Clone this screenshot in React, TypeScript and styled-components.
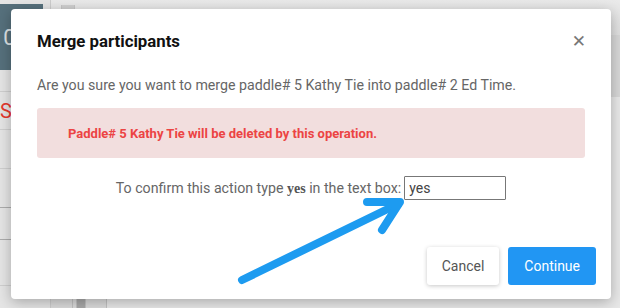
import React, { useState } from 'react'
import styled, { createGlobalStyle } from 'styled-components'

const GlobalStyle = createGlobalStyle`
  html, body {
    margin: 0;
    padding: 0;
    width: 620px;
    height: 308px;
    overflow: hidden;
    font-family: Roboto, 'Liberation Sans', sans-serif;
  }
`

const Page = styled.div`
  position: relative;
  width: 620px;
  height: 308px;
  display: flex;
  background: #f2f2f2;
  overflow: hidden;
`

const Sidebar = styled.div`
  width: 50px;
  display: flex;
  flex-direction: column;
  border-right: 1px solid #d6d6d6;
  background: #efefef;
`

const SideHead = styled.div`
  margin-top: 4px;
  height: 66px;
  width: 43px;
  background: #5a7582;
  color: #e6ecef;
  font-size: 22px;
  display: flex;
  align-items: center;
  overflow: hidden;
`

const HeadNum = styled.span`
  margin-left: -9px;
`

const SideRow = styled.div<{ $h: number; $dark?: boolean }>`
  height: ${p => p.$h}px;
  border-bottom: 1px solid ${p => (p.$dark ? '#b4b4b4' : '#d8d8d8')};
  color: #f03a2e;
  font-size: 20px;
  display: flex;
  align-items: center;
`

const Main = styled.div`
  flex: 1;
  display: flex;
  flex-direction: column;
`

const TopBar = styled.div`
  height: 35px;
  background: linear-gradient(#f4f4f4, #e9e9e9);
  display: flex;
  align-items: flex-start;
  padding-left: 10px;
`

const ScrollNub = styled.div`
  margin-top: 5px;
  width: 12px;
  height: 8px;
  border-left: 1px solid #cfcfcf;
  border-right: 1px solid #cfcfcf;
  background: #d9d9d9;
`

const GreyBand = styled.div`
  height: 62px;
  background: #e0e0e0;
`

const Fill = styled.div`
  flex: 1;
  display: flex;
  align-items: flex-end;
`

const FootCell = styled.div<{ $w: number; $dark?: boolean }>`
  width: ${p => p.$w}px;
  height: 9px;
  border-right: 1px solid #cacaca;
  background: ${p => (p.$dark ? '#b0b0b0' : '#e4e4e4')};
`

const Overlay = styled.div`
  position: absolute;
  inset: 0;
  background: rgba(0, 0, 0, 0.04);
`

const Modal = styled.div`
  position: absolute;
  left: 11px;
  top: 9px;
  width: 600px;
  height: 290px;
  background: #fff;
  border-radius: 4px;
  box-shadow: 0 3px 14px rgba(0, 0, 0, 0.28);
  display: flex;
  flex-direction: column;
`

const Header = styled.div`
  display: flex;
  align-items: center;
  justify-content: space-between;
  padding: 20px 26px 0 26px;
`

const Title = styled.h3`
  margin: 0;
  font-size: 16.8px;
  line-height: 24px;
  font-weight: 700;
  color: #111;
`

const Close = styled.button`
  border: 0;
  background: none;
  padding: 0;
  margin-right: -1px;
  font-family: 'DejaVu Sans', sans-serif;
  font-size: 17px;
  line-height: 24px;
  color: #777;
  cursor: pointer;
`

const Body = styled.div`
  padding: 22px 26px 0 26px;
  display: flex;
  flex-direction: column;
`

const Text = styled.p`
  margin: 0;
  font-size: 14.2px;
  line-height: 20px;
  color: #666;
`

const Alert = styled.div`
  margin-top: 13px;
  height: 50px;
  background: #f2dede;
  border-radius: 3px;
  display: flex;
  align-items: center;
  padding-left: 31px;
  font-size: 13px;
  font-weight: 700;
  color: #ec4444;
`

const ConfirmRow = styled.div`
  margin-top: 18px;
  display: flex;
  justify-content: center;
  align-items: center;
  gap: 3px;
  font-size: 14.2px;
  color: #666;
`

const Keyword = styled.b`
  font-family: 'Liberation Serif', serif;
  font-size: 14px;
  color: #555;
`

const Field = styled.input`
  width: 102px;
  height: 24px;
  box-sizing: border-box;
  border: 1px solid #777;
  border-radius: 1px;
  padding: 0 4px;
  font-family: Roboto, sans-serif;
  font-size: 14px;
  color: #444;
  outline: none;
`

const Footer = styled.div`
  margin-top: auto;
  padding: 0 15px 14px 0;
  display: flex;
  justify-content: flex-end;
  gap: 9px;
`

const Button = styled.button<{ $primary?: boolean }>`
  height: 38px;
  padding: 0 ${p => (p.$primary ? 16 : 15)}px;
  border: 0;
  border-radius: 3px;
  font-family: Roboto, sans-serif;
  font-size: 14px;
  background: ${p => (p.$primary ? '#2196f3' : '#fff')};
  color: ${p => (p.$primary ? '#fff' : '#555')};
  box-shadow: ${p => (p.$primary ? 'none' : '0 1px 4px rgba(0,0,0,0.22)')};
  cursor: pointer;
`

const Annotation = styled.svg`
  position: absolute;
  left: 0;
  top: 0;
  pointer-events: none;
`

const App = () => {
  const [value, setValue] = useState('yes')

  return (
    <>
      <GlobalStyle />
      <Page>
        <Sidebar>
          <SideHead>
            <HeadNum>10</HeadNum>
          </SideHead>
          <SideRow $h={21} />
          <SideRow $h={37}>S</SideRow>
          <SideRow $h={38} />
          <SideRow $h={38} $dark />
          <SideRow $h={31} $dark />
          <SideRow $h={45} />
        </Sidebar>
        <Main>
          <TopBar>
            <ScrollNub />
          </TopBar>
          <GreyBand />
          <Fill>
            <FootCell $w={21} />
            <FootCell $w={3} />
            <FootCell $w={8} $dark />
            <FootCell $w={20} />
          </Fill>
        </Main>
        <Overlay />
        <Modal>
          <Header>
            <Title>Merge participants</Title>
            <Close>✕</Close>
          </Header>
          <Body>
            <Text>Are you sure you want to merge paddle# 5 Kathy Tie into paddle# 2 Ed Time.</Text>
            <Alert>Paddle# 5 Kathy Tie will be deleted by this operation.</Alert>
            <ConfirmRow>
              <span>
                To confirm this action type <Keyword>yes</Keyword> in the text box:
              </span>
              <Field value={value} onChange={e => setValue(e.target.value)} />
            </ConfirmRow>
          </Body>
          <Footer>
            <Button>Cancel</Button>
            <Button $primary>Continue</Button>
          </Footer>
        </Modal>
        <Annotation width="620" height="308" viewBox="0 0 620 308">
          <g stroke="#1d9bf0" strokeWidth="8" strokeLinecap="round" strokeLinejoin="round" fill="none">
            <path d="M242 280 L398 204" />
            <path d="M367 202 L400 202 L382 230" />
          </g>
        </Annotation>
      </Page>
    </>
  )
}

export default App
